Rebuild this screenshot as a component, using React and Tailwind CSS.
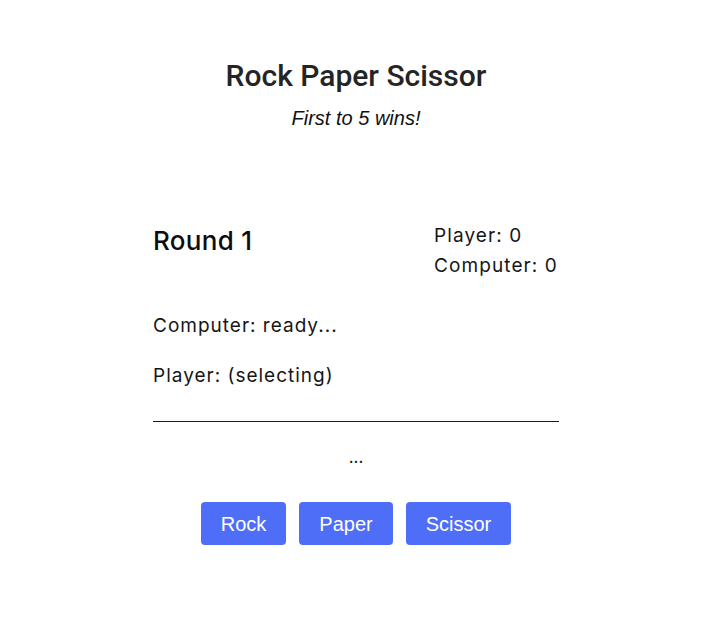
import React from "react";

export default function App() {
  const choices = ["Rock", "Paper", "Scissor"];

  return (
    <div className="min-h-screen bg-white pl-[5px] text-[#161616]">
      {/* Header */}
      <div className="pt-[56px] text-center">
        <h1 className="font-['Roboto',sans-serif] text-[30px] font-medium leading-[40px] text-[#242424]">
          Rock Paper Scissor
        </h1>
        <p className="mt-[10px] font-['Liberation_Sans',Arial,sans-serif] text-[20px] italic leading-[24px] text-[#111]">
          First to 5 wins!
        </p>
      </div>

      {/* Board */}
      <div className="mx-auto mt-[91px] w-[406px] font-['Inter',sans-serif]">
        <div className="flex items-start justify-between">
          <h2 className="mt-[4px] text-[26px] font-medium leading-[32px] tracking-[0.3px] text-[#0d0d0d]">
            Round 1
          </h2>
          <div className="w-[125px] text-[19px] leading-[30px] tracking-[1.1px]">
            <p>Player: 0</p>
            <p>Computer: 0</p>
          </div>
        </div>

        <p className="mt-[30px] text-[19px] leading-[30px] tracking-[1px]">Computer: ready...</p>
        <p className="mt-[20px] text-[19px] leading-[30px] tracking-[1px]">Player: (selecting)</p>

        <div className="mt-[30px] border-t border-[#1a1a1a]" />

        <p className="mt-[20px] text-center text-[17px] leading-[30px]">...</p>
      </div>

      {/* Choices */}
      <div className="mt-[30px] flex justify-center gap-[13px] font-['Liberation_Sans',Arial,sans-serif]">
        {choices.map((c) => (
          <button
            key={c}
            className="h-[43px] rounded-[4px] bg-[#4f6ef7] px-[20px] text-[20px] text-white"
          >
            {c}
          </button>
        ))}
      </div>
    </div>
  );
}
